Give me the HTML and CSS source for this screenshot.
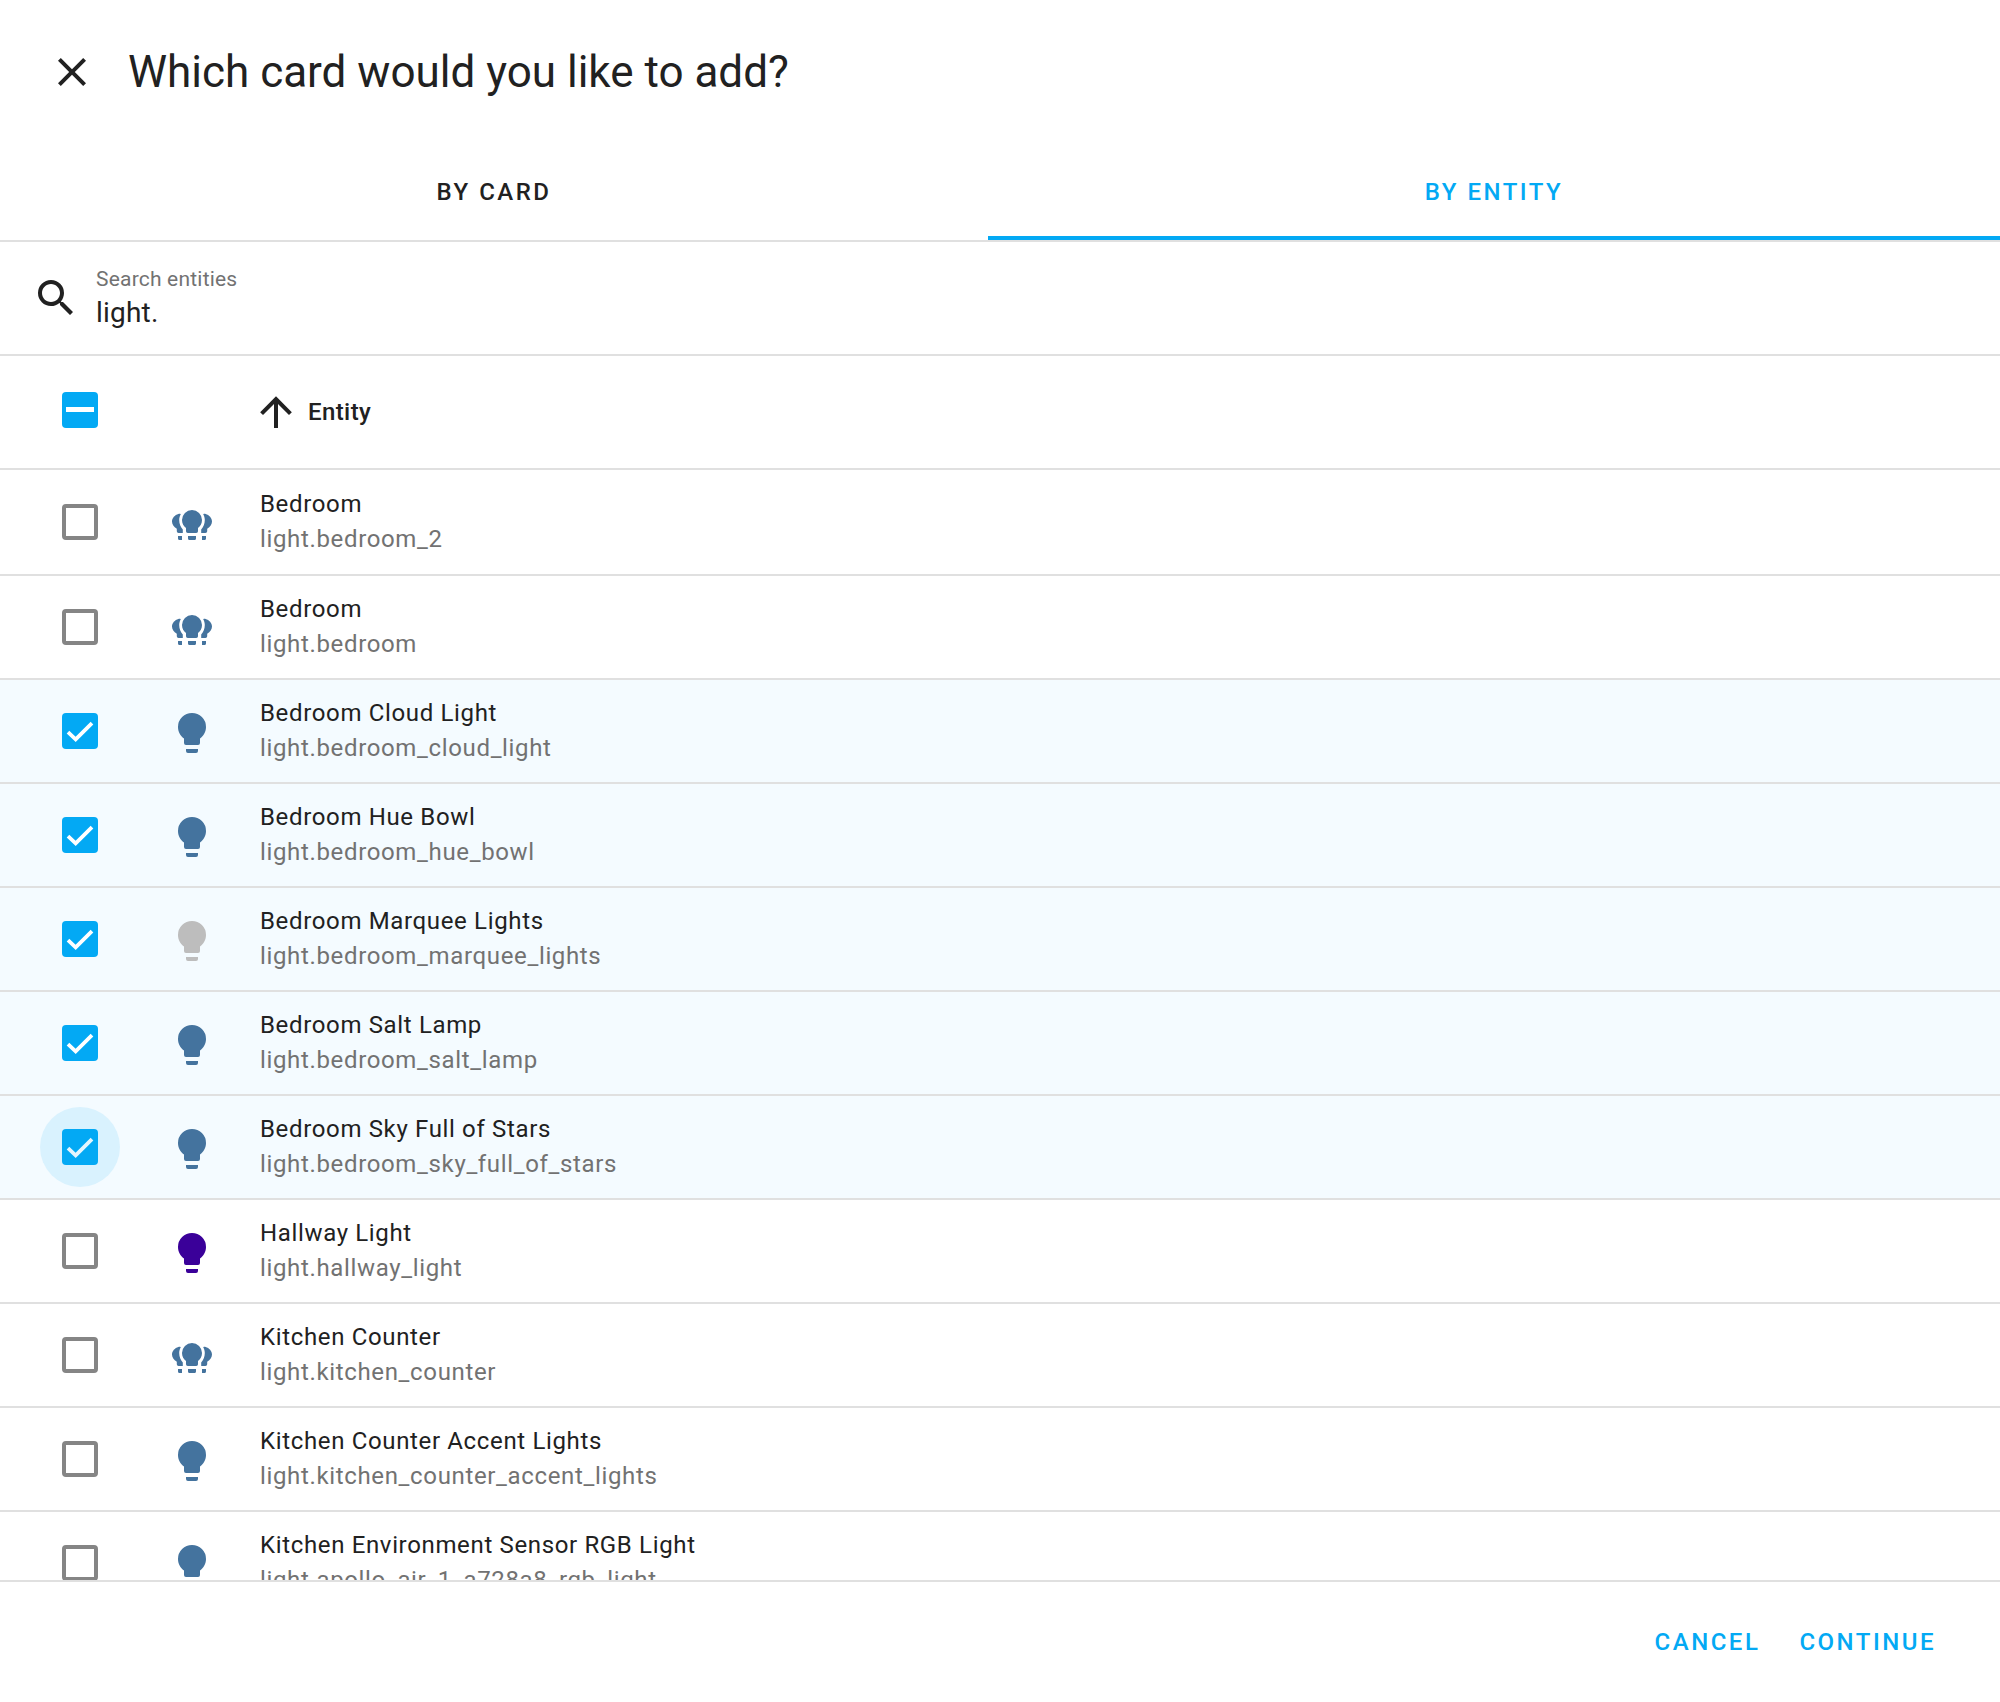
FILE: index.html
```html
<!DOCTYPE html>
<html lang="en">
<head>
<meta charset="utf-8">
<title>Which card would you like to add?</title>
<link rel="stylesheet" href="styles.css">
</head>
<body>
<svg class="defs" width="0" height="0" aria-hidden="true">
  <symbol id="bulb" viewBox="0 0 24 24"><path d="M12,2A7,7 0 0,0 5,9C5,11.38 6.19,13.47 8,14.74V17A1,1 0 0,0 9,18H15A1,1 0 0,0 16,17V14.74C17.81,13.47 19,11.38 19,9A7,7 0 0,0 12,2M9,21A1,1 0 0,0 10,22H14A1,1 0 0,0 15,21V20H9V21Z"/></symbol>
  <symbol id="group" viewBox="0 0 24 24"><path d="M12,6A5,5 0 0,0 7,11C7,12.7 7.85,14.2 9,15V16.6A.9,.9 0 0,0 9.9,17.5H14.1A.9,.9 0 0,0 15,16.6V15C16.15,14.2 17,12.7 17,11A5,5 0 0,0 12,6M10,19V20.2A.8,.8 0 0,0 10.8,21H13.2A.8,.8 0 0,0 14,20.2V19H10M5.2,8C3.4,8.5 2,10 2,11.8C2,13.2 2.9,14.6 4.4,15.4V16.6A.9,.9 0 0,0 5.3,17.5H7.4V15.8C6.3,14.6 5.6,12.8 5.6,11C5.6,9.9 5.9,8.9 6.4,8.1C6,7.9 5.6,7.9 5.2,8M18.8,8C18.4,7.9 18,7.9 17.6,8.1C18.1,8.9 18.4,9.9 18.4,11C18.4,12.8 17.7,14.6 16.6,15.8V17.5H18.7A.9,.9 0 0,0 19.6,16.6V15.4C21.1,14.6 22,13.2 22,11.8C22,10 20.6,8.5 18.8,8M5,19V20.2A.8,.8 0 0,0 5.8,21H7V19H5M17,19V21H18.2A.8,.8 0 0,0 19,20.2V19H17Z"/></symbol>
</svg>
<main class="dialog">
  <header class="title-bar">
    <svg class="icon close" viewBox="0 0 24 24"><path d="M19,6.41L17.59,5L12,10.59L6.41,5L5,6.41L10.59,12L5,17.59L6.41,19L12,13.41L17.59,19L19,17.59L13.41,12L19,6.41Z"/></svg>
    <h1 class="title">Which card would you like to add?</h1>
  </header>
  <nav class="tabs">
    <div class="tab tab-card">BY CARD</div>
    <div class="tab tab-entity">BY ENTITY</div>
  </nav>
  <div class="search">
    <svg class="icon search-icon" viewBox="0 0 24 24"><path d="M9.5,3A6.5,6.5 0 0,1 16,9.5C16,11.11 15.41,12.59 14.44,13.73L14.71,14H15.5L20.5,19L19,20.5L14,15.5V14.71L13.73,14.44C12.59,15.41 11.11,16 9.5,16A6.5,6.5 0 0,1 3,9.5A6.5,6.5 0 0,1 9.5,3M9.5,5C7,5 5,7 5,9.5C5,12 7,14 9.5,14C12,14 14,12 14,9.5C14,7 12,5 9.5,5Z"/></svg>
    <div class="search-field">
      <div class="search-label">Search entities</div>
      <div class="search-value">light.</div>
    </div>
  </div>
  <div class="table-head">
    <div class="cell-check"><span class="box box-on box-head"><span class="dash"></span></span></div>
    <div class="cell-icon"></div>
    <svg class="icon sort" viewBox="0 0 24 24"><path d="M13,20H11V8L5.5,13.5L4.08,12.08L12,4.16L19.92,12.08L18.5,13.5L13,8V20Z"/></svg>
    <div class="head-label">Entity</div>
  </div>
  <div class="rows">
    <div class="row row-first">
      <div class="cell-check"><span class="box"></span></div>
      <div class="cell-icon"><svg class="icon ent"><use href="#group"/></svg></div>
      <div class="cell-text"><div class="name">Bedroom</div><div class="id">light.bedroom_2</div></div>
    </div>
    <div class="row">
      <div class="cell-check"><span class="box"></span></div>
      <div class="cell-icon"><svg class="icon ent"><use href="#group"/></svg></div>
      <div class="cell-text"><div class="name">Bedroom</div><div class="id">light.bedroom</div></div>
    </div>
    <div class="row selected">
      <div class="cell-check"><span class="box box-on"><svg class="tick" viewBox="0 0 24 24"><path d="M4 12.8L9.1 17.6L20 6.7"/></svg></span></div>
      <div class="cell-icon"><svg class="icon ent single"><use href="#bulb"/></svg></div>
      <div class="cell-text"><div class="name">Bedroom Cloud Light</div><div class="id">light.bedroom_cloud_light</div></div>
    </div>
    <div class="row selected">
      <div class="cell-check"><span class="box box-on"><svg class="tick" viewBox="0 0 24 24"><path d="M4 12.8L9.1 17.6L20 6.7"/></svg></span></div>
      <div class="cell-icon"><svg class="icon ent single"><use href="#bulb"/></svg></div>
      <div class="cell-text"><div class="name">Bedroom Hue Bowl</div><div class="id">light.bedroom_hue_bowl</div></div>
    </div>
    <div class="row selected">
      <div class="cell-check"><span class="box box-on"><svg class="tick" viewBox="0 0 24 24"><path d="M4 12.8L9.1 17.6L20 6.7"/></svg></span></div>
      <div class="cell-icon"><svg class="icon ent single off"><use href="#bulb"/></svg></div>
      <div class="cell-text"><div class="name">Bedroom Marquee Lights</div><div class="id">light.bedroom_marquee_lights</div></div>
    </div>
    <div class="row selected">
      <div class="cell-check"><span class="box box-on"><svg class="tick" viewBox="0 0 24 24"><path d="M4 12.8L9.1 17.6L20 6.7"/></svg></span></div>
      <div class="cell-icon"><svg class="icon ent single"><use href="#bulb"/></svg></div>
      <div class="cell-text"><div class="name">Bedroom Salt Lamp</div><div class="id">light.bedroom_salt_lamp</div></div>
    </div>
    <div class="row selected">
      <div class="cell-check"><span class="ripple"></span><span class="box box-on"><svg class="tick tick-focus" viewBox="0 0 24 24"><path d="M4 12.8L9.1 17.6L20 6.7"/></svg></span></div>
      <div class="cell-icon"><svg class="icon ent single"><use href="#bulb"/></svg></div>
      <div class="cell-text"><div class="name">Bedroom Sky Full of Stars</div><div class="id">light.bedroom_sky_full_of_stars</div></div>
    </div>
    <div class="row">
      <div class="cell-check"><span class="box"></span></div>
      <div class="cell-icon"><svg class="icon ent single purple"><use href="#bulb"/></svg></div>
      <div class="cell-text"><div class="name">Hallway Light</div><div class="id">light.hallway_light</div></div>
    </div>
    <div class="row">
      <div class="cell-check"><span class="box"></span></div>
      <div class="cell-icon"><svg class="icon ent"><use href="#group"/></svg></div>
      <div class="cell-text"><div class="name">Kitchen Counter</div><div class="id">light.kitchen_counter</div></div>
    </div>
    <div class="row">
      <div class="cell-check"><span class="box"></span></div>
      <div class="cell-icon"><svg class="icon ent single"><use href="#bulb"/></svg></div>
      <div class="cell-text"><div class="name">Kitchen Counter Accent Lights</div><div class="id">light.kitchen_counter_accent_lights</div></div>
    </div>
    <div class="row">
      <div class="cell-check"><span class="box"></span></div>
      <div class="cell-icon"><svg class="icon ent single"><use href="#bulb"/></svg></div>
      <div class="cell-text"><div class="name">Kitchen Environment Sensor RGB Light</div><div class="id">light.apollo_air_1_a728a8_rgb_light</div></div>
    </div>
  </div>
  <footer class="actions">
    <div class="action">CANCEL</div>
    <div class="action">CONTINUE</div>
  </footer>
</main>
</body>
</html>
```

FILE: styles.css
```css
* { box-sizing: border-box; }
html, body { margin: 0; padding: 0; height: 100%; background: #fff; }
body { font-family: Roboto, "Liberation Sans", sans-serif; color: #212121; overflow: hidden; }
.defs { display: block; height: 0; }
.icon { display: block; width: 48px; height: 48px; fill: #212121; flex: none; }

.dialog { display: flex; flex-direction: column; height: 1702px; }

.title-bar { height: 144px; display: flex; align-items: center; padding-left: 48px; gap: 32px; }
.title { margin: 0; font-size: 44px; font-weight: 400; line-height: 48px; color: #212121; }

.tabs { height: 98px; display: flex; border-bottom: 2px solid #e0e0e0; }
.tab { display: flex; align-items: center; justify-content: center; font-size: 24px; font-weight: 500; letter-spacing: 2.5px; }
.tab-card { width: 988px; color: #212121; }
.tab-entity { flex: 1; color: #03a9f4; border-bottom: 4px solid #03a9f4; padding-top: 4px; }

.search { height: 114px; display: flex; align-items: flex-start; border-bottom: 2px solid #e0e0e0; padding: 32px 0 0 32px; gap: 16px; }
.search-field { margin-top: -8px; }
.search-label { font-size: 21px; line-height: 26px; color: #727272; letter-spacing: 0.2px; }
.search-value { font-size: 28px; line-height: 38px; color: #212121; letter-spacing: 0.2px; margin-top: 2px; }

.table-head { height: 114px; display: flex; align-items: center; border-bottom: 2px solid #e0e0e0; }
.cell-check { width: 160px; flex: none; display: flex; align-items: center; padding-left: 62px; position: relative; }
.cell-icon { width: 92px; flex: none; display: flex; justify-content: flex-start; padding-left: 8px; }
.head-label { font-size: 24px; font-weight: 500; margin-left: 8px; color: #212121; letter-spacing: 0.4px; }

.box { display: block; position: relative; width: 36px; height: 36px; border: 4px solid #858585; border-radius: 4px; }
.box-on { background: #03a9f4; border: 0; }
.box-head { margin-bottom: 4px; }
.dash { position: absolute; left: 4px; right: 4px; top: 15px; height: 5px; background: #fff; }
.tick { display: block; width: 36px; height: 36px; fill: none; stroke: #fff; stroke-width: 2.5; }
.tick-focus { stroke: #e4f6fe; }
.ripple { position: absolute; left: 40px; top: 50%; width: 80px; height: 80px; margin-top: -40px; border-radius: 50%; background: #d9f2fe; }

.rows { flex: 1; min-height: 0; overflow: hidden; }
.row { height: 104px; display: flex; align-items: center; border-bottom: 2px solid #e0e0e0; }
.row-first { height: 106px; }
.selected { background: #f4fbff; }
.ent { fill: #44739e; }
.single { margin-top: 4px; }
.off { fill: #bdbdbd; }
.purple { fill: #3a0099; }
.name { font-size: 24px; line-height: 32px; letter-spacing: 0.65px; color: #212121; }
.id { font-size: 24px; line-height: 32px; letter-spacing: 0.65px; color: #727272; margin-top: 3px; }
.cell-text { margin-top: -2px; padding-left: 8px; }

.actions { height: 122px; flex: none; display: flex; justify-content: flex-end; align-items: center; gap: 39px; padding-right: 64px; border-top: 2px solid #e0e0e0; }
.action { font-size: 24px; font-weight: 500; letter-spacing: 2.5px; color: #03a9f4; }
```
